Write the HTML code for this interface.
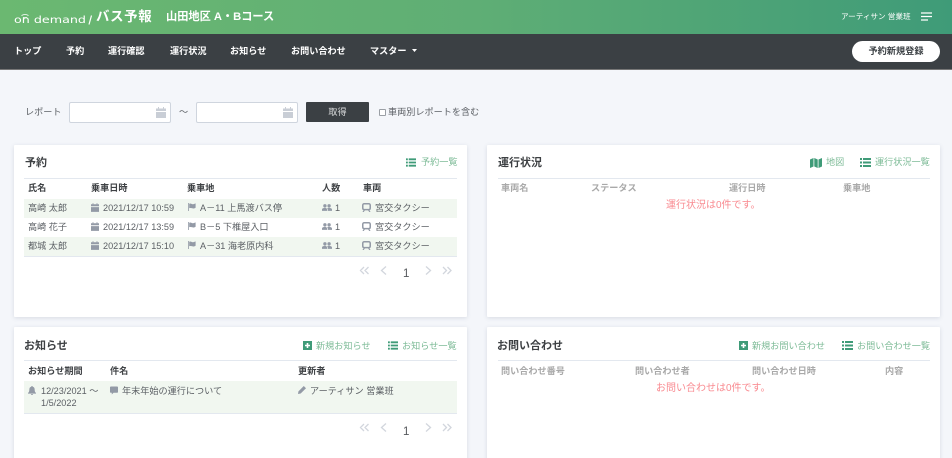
<!DOCTYPE html>
<html lang="ja"><head><meta charset="utf-8"><title>バス予報</title>
<style>
html,body{margin:0;padding:0;width:952px;height:458px;overflow:hidden;background:#f4f6fa}
body{position:relative;font-family:"Liberation Sans","Noto Sans CJK JP",sans-serif;font-size:9.15px;color:#5c6065;filter:blur(.3px)}
.a{position:absolute;white-space:nowrap;line-height:14px}
.b{font-weight:700}
.h{position:absolute;left:0;top:0;width:952px;height:34px;background:linear-gradient(90deg,#6bb871 0%,#5fae75 50%,#3f9b78 100%)}
.n{position:absolute;left:0;top:34px;width:952px;height:35px;background:#3b4044;border-bottom:1px solid #777}
.nt{color:#fff;font-weight:700;top:44px}
.c{position:absolute;background:#fff;box-shadow:0 1px 4px rgba(90,100,130,.18);border-radius:1px}
.t{font-size:11px;font-weight:700;color:#3d4043}
.g{color:#7dbb97}
.l{position:absolute;height:1px;background:#e3e8ef}
.r{position:absolute;background:#f1f7f0}
.th{font-weight:700;color:#3f4245}
.tg{font-weight:700;color:#a9a9a9}
.e{color:#f98a90;font-size:10px}
.i{position:absolute;fill:#939aa6}
.gi{position:absolute;fill:#3f9b78}
.f{position:absolute;top:102px;height:19px;width:100px;background:#fff;border:1px solid #cfd5de;border-radius:2px}
</style></head><body>
<div class="h"></div>
<div class="n"></div>

<svg class="a" style="left:14px;top:10px;overflow:visible" width="76" height="16">
<text x="0" y="13" font-size="10" fill="#fff" textLength="72" lengthAdjust="spacingAndGlyphs" font-family="DejaVu Sans" font-weight="400">on demand</text>
<path d="M7.500 5.500q3.500-2 7 0M9 7.500h4" stroke="#fff" fill="none" stroke-width=".8"/>
<path d="M75 14.500 77.500 5.500" stroke="#fff" stroke-width="1.200"/></svg>
<div class="a" style="left:96px;top:8px;color:#fff;font-size:13.4px;line-height:18px;font-weight:700;letter-spacing:.7px">バス予報</div>
<div class="a b" style="left:166px;top:10px;color:#fff;font-size:11.200px">山田地区 A・Bコース</div>
<div class="a" style="left:841px;top:10px;color:#fff;font-size:7.6px">アーティサン 営業班</div>
<svg class="a" style="left:921px;top:12px" width="12" height="9"><path d="M0 1h11M0 4.500h11M0 8h7" stroke="#fff" stroke-width="1.200"/></svg>

<div class="a nt" style="left:14px">トップ</div>
<div class="a nt" style="left:66px">予約</div>
<div class="a nt" style="left:108px">運行確認</div>
<div class="a nt" style="left:170px">運行状況</div>
<div class="a nt" style="left:230px">お知らせ</div>
<div class="a nt" style="left:291px">お問い合わせ</div>
<div class="a nt" style="left:370px">マスター</div>
<svg class="a" style="left:412px;top:49px" width="5" height="3"><path d="M0 0h5L2.500 3z" fill="#fff"/></svg>
<div class="a b" style="left:852px;top:41px;width:88px;height:21px;line-height:21px;background:#fff;border-radius:11px;text-align:center;color:#3b4044;font-size:9.2px">予約新規登録</div>

<div class="a" style="left:25px;top:105px">レポート</div>
<div class="f" style="left:69px"></div>
<div class="f" style="left:196px"></div>
<svg class="i" style="left:156px;top:107px;fill:#c9ced6" width="10" height="11"><use href="#cal"/></svg>
<svg class="i" style="left:283px;top:107px;fill:#c9ced6" width="10" height="11"><use href="#cal"/></svg>
<div class="a" style="left:179px;top:105px">～</div>
<div class="a" style="left:306px;top:102px;width:63px;height:20px;line-height:20px;background:#3b4044;text-align:center;color:#d8dadb;border-radius:1px">取得</div>
<div class="a" style="left:379px;top:109px;width:5px;height:5px;border:1px solid #9a9fa5;background:#fff;border-radius:1px"></div>
<div class="a" style="left:388px;top:105px">車両別レポートを含む</div>

<svg width="0" height="0" style="position:absolute"><defs>
<symbol id="cal" viewBox="0 0 10 11"><path d="M2 0h1v1.500h4V0h1v1.500h2V4H0V1.500h2zM0 5h10v6H0z"/></symbol>
<symbol id="flag" viewBox="0 0 10 10"><path d="M0 0h1v10H0zM1.500 1c2-1 3 .5 4.500.5S8.500 1 9.500 .5v5.500c-1 .7-2 1-3.500 .7S3 5.800 1.500 6.500z"/></symbol>
<symbol id="ppl" viewBox="0 0 12 8"><circle cx="3.500" cy="2" r="2"/><circle cx="8.500" cy="2" r="2"/><path d="M0 8V6.500C0 5 2 4.500 3.500 4.500S6 5 6 6.500V8zM6.800 8V6.300c0-.7-.3-1.300-.7-1.600.8-.2 1.700-.2 2.400-.2C10 4.500 12 5 12 6.500V8z"/></symbol>
<symbol id="bus" viewBox="0 0 10 10"><path fill-rule="evenodd" d="M2.500 0h5C9 0 10 1 10 2.500v3C10 7 9.300 7.800 8.300 8L9.500 10H8L6.800 8.200H3.200L2 10H.5l1.200-2C.7 7.800 0 7 0 5.500v-3C0 1 1 0 2.500 0zm0 1.700c-.5 0-.8.300-.8.800v3c0 .6.300 1 .8 1h5c.5 0 .8-.4.800-1v-3c0-.5-.3-.8-.8-.8z"/></symbol>
<symbol id="list" viewBox="0 0 11 9"><path d="M0 0h2v2H0zM3 0h8v2H3zM0 3.500h2v2H0zM3 3.500h8v2H3zM0 7h2v2H0zM3 7h8v2H3z"/></symbol>
<symbol id="plus" viewBox="0 0 9 9"><path fill-rule="evenodd" d="M0 0h9v9H0zM3.700 2v1.700H2v1.600h1.700V7h1.600V5.300H7V3.700H5.300V2z"/></symbol>
<symbol id="map" viewBox="0 0 12 10"><path d="M0 1.500 3.500 0v8.500L0 10zM4.300 0 7.700 1.500V10L4.300 8.500zM8.500 1.500 12 0v8.500L8.500 10z"/></symbol>
<symbol id="bell" viewBox="0 0 9 10"><path d="M4.500 0c.5 0 .8.300.8.800C7 1.200 7.500 2.500 7.500 4c0 2 .5 3 1.500 3.800V8.500H0v-.7C1 7 1.500 6 1.500 4c0-1.500.5-2.800 2.200-3.200 0-.5.300-.8.800-.8zM3.300 9h2.400c0 .6-.5 1-1.200 1S3.300 9.600 3.300 9z"/></symbol>
<symbol id="msg" viewBox="0 0 9 9"><path d="M1 0h7c.6 0 1 .4 1 1v5c0 .6-.4 1-1 1H4L2 9V7H1C.4 7 0 6.600 0 6V1C0 .4.400 0 1 0z"/></symbol>
<symbol id="pen" viewBox="0 0 9 9"><path d="M6.500 0 9 2.500 3 8.500 0 9 .5 6z"/></symbol>
</defs></svg>

<!-- 予約 -->
<div class="c" style="left:14px;top:145px;width:453px;height:172px"></div>
<div class="a t" style="left:25px;top:156px">予約</div>
<svg class="gi" style="left:406px;top:158px" width="10" height="9"><use href="#list"/></svg>
<div class="a g" style="left:421px;top:155px">予約一覧</div>
<div class="l" style="left:24px;top:178px;width:433px"></div>
<div class="a th" style="left:28px;top:181px">氏名</div>
<div class="a th" style="left:91px;top:181px">乗車日時</div>
<div class="a th" style="left:187px;top:181px">乗車地</div>
<div class="a th" style="left:322px;top:181px">人数</div>
<div class="a th" style="left:363px;top:181px">車両</div>
<div class="r" style="left:24px;top:199px;width:433px;height:19px"></div>
<div class="r" style="left:24px;top:237px;width:433px;height:19px"></div>
<div class="l" style="left:24px;top:256px;width:433px"></div>

<div class="a" style="left:28px;top:201px">高崎 太郎</div>
<svg class="i" style="left:91px;top:203px" width="8" height="9"><use href="#cal"/></svg>
<div class="a" style="left:103px;top:201px">2021/12/17 10:59</div>
<svg class="i" style="left:188px;top:203px" width="8" height="8"><use href="#flag"/></svg>
<div class="a" style="left:200px;top:201px">A－11 上馬渡バス停</div>
<svg class="i" style="left:322px;top:204px" width="10" height="7"><use href="#ppl"/></svg>
<div class="a" style="left:335px;top:201px">1</div>
<svg class="i" style="left:362px;top:203px" width="9" height="9"><use href="#bus"/></svg>
<div class="a" style="left:375px;top:201px">宮交タクシー</div>

<div class="a" style="left:28px;top:220px">高崎 花子</div>
<svg class="i" style="left:91px;top:222px" width="8" height="9"><use href="#cal"/></svg>
<div class="a" style="left:103px;top:220px">2021/12/17 13:59</div>
<svg class="i" style="left:188px;top:222px" width="8" height="8"><use href="#flag"/></svg>
<div class="a" style="left:200px;top:220px">B－5 下椎屋入口</div>
<svg class="i" style="left:322px;top:223px" width="10" height="7"><use href="#ppl"/></svg>
<div class="a" style="left:335px;top:220px">1</div>
<svg class="i" style="left:362px;top:222px" width="9" height="9"><use href="#bus"/></svg>
<div class="a" style="left:375px;top:220px">宮交タクシー</div>

<div class="a" style="left:28px;top:239px">都城 太郎</div>
<svg class="i" style="left:91px;top:241px" width="8" height="9"><use href="#cal"/></svg>
<div class="a" style="left:103px;top:239px">2021/12/17 15:10</div>
<svg class="i" style="left:188px;top:241px" width="8" height="8"><use href="#flag"/></svg>
<div class="a" style="left:200px;top:239px">A－31 海老原内科</div>
<svg class="i" style="left:322px;top:242px" width="10" height="7"><use href="#ppl"/></svg>
<div class="a" style="left:335px;top:239px">1</div>
<svg class="i" style="left:362px;top:241px" width="9" height="9"><use href="#bus"/></svg>
<div class="a" style="left:375px;top:239px">宮交タクシー</div>

<svg class="a" style="left:359px;top:266px" width="94" height="10" fill="none" stroke="#d2d6dd" stroke-width="1.300"><path d="M5 1 1.500 4.500 5 8M9.500 1 6 4.500 9.500 8M27 .5 22.500 4.500 27 8.500M67 .5 71.500 4.500 67 8.500M84 1 87.500 4.500 84 8M88.500 1 92 4.500 88.500 8"/></svg>
<div class="a" style="left:403px;top:267px;font-size:11.500px;color:#55585c">1</div>

<!-- 運行状況 -->
<div class="c" style="left:487px;top:145px;width:453px;height:172px"></div>
<div class="a t" style="left:498px;top:156px">運行状況</div>
<svg class="gi" style="left:810px;top:158px" width="12" height="10"><use href="#map"/></svg>
<div class="a g" style="left:826px;top:155px">地図</div>
<svg class="gi" style="left:860px;top:158px" width="11" height="9"><use href="#list"/></svg>
<div class="a g" style="left:875px;top:155px">運行状況一覧</div>
<div class="l" style="left:498px;top:178px;width:432px"></div>
<div class="a tg" style="left:501px;top:181px">車両名</div>
<div class="a tg" style="left:591px;top:181px">ステータス</div>
<div class="a tg" style="left:729px;top:181px">運行日時</div>
<div class="a tg" style="left:843px;top:181px">乗車地</div>
<div class="a e" style="left:666px;top:199px">運行状況は0件です。</div>

<!-- お知らせ -->
<div class="c" style="left:14px;top:327px;width:453px;height:140px"></div>
<div class="a t" style="left:24px;top:339px">お知らせ</div>
<svg class="gi" style="left:303px;top:341px" width="9" height="9"><use href="#plus"/></svg>
<div class="a g" style="left:316px;top:339px">新規お知らせ</div>
<svg class="gi" style="left:388px;top:341px" width="10" height="9"><use href="#list"/></svg>
<div class="a g" style="left:402px;top:339px">お知らせ一覧</div>
<div class="l" style="left:24px;top:360px;width:433px"></div>
<div class="a th" style="left:28px;top:364px">お知らせ期間</div>
<div class="a th" style="left:110px;top:364px">件名</div>
<div class="a th" style="left:298px;top:364px">更新者</div>
<div class="r" style="left:24px;top:381px;width:433px;height:32px"></div>
<div class="l" style="left:24px;top:413px;width:433px"></div>
<svg class="i" style="left:28px;top:386px" width="8" height="9"><use href="#bell"/></svg>
<div class="a" style="left:41px;top:384px">12/23/2021 ～</div>
<div class="a" style="left:41px;top:396px">1/5/2022</div>
<svg class="i" style="left:110px;top:386px" width="8" height="9"><use href="#msg"/></svg>
<div class="a" style="left:122px;top:384px">年末年始の運行について</div>
<svg class="i" style="left:298px;top:386px" width="8" height="8"><use href="#pen"/></svg>
<div class="a" style="left:310px;top:384px">アーティサン 営業班</div>
<svg class="a" style="left:359px;top:423px" width="94" height="10" fill="none" stroke="#d2d6dd" stroke-width="1.300"><path d="M5 1 1.500 4.500 5 8M9.500 1 6 4.500 9.500 8M27 .5 22.500 4.500 27 8.500M67 .5 71.500 4.500 67 8.500M84 1 87.500 4.500 84 8M88.500 1 92 4.500 88.500 8"/></svg>
<div class="a" style="left:403px;top:425px;font-size:11.500px;color:#55585c">1</div>

<!-- お問い合わせ -->
<div class="c" style="left:487px;top:327px;width:453px;height:140px"></div>
<div class="a t" style="left:497px;top:339px">お問い合わせ</div>
<svg class="gi" style="left:739px;top:341px" width="9" height="9"><use href="#plus"/></svg>
<div class="a g" style="left:752px;top:339px">新規お問い合わせ</div>
<svg class="gi" style="left:842px;top:341px" width="11" height="9"><use href="#list"/></svg>
<div class="a g" style="left:857px;top:339px">お問い合わせ一覧</div>
<div class="l" style="left:498px;top:360px;width:432px"></div>
<div class="a tg" style="left:501px;top:364px">問い合わせ番号</div>
<div class="a tg" style="left:635px;top:364px">問い合わせ者</div>
<div class="a tg" style="left:752px;top:364px">問い合わせ日時</div>
<div class="a tg" style="left:885px;top:364px">内容</div>
<div class="a e" style="left:656px;top:382px">お問い合わせは0件です。</div>
</body></html>
